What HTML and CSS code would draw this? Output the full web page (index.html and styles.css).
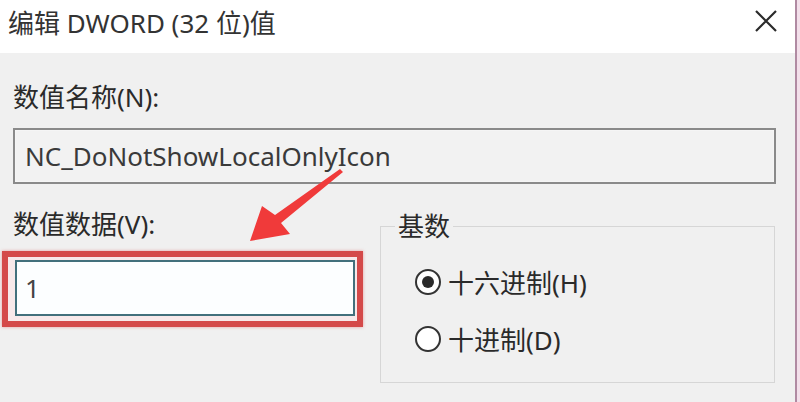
FILE: index.html
```html
<!DOCTYPE html>
<html lang="zh-CN">
<head>
<meta charset="utf-8">
<title>编辑 DWORD (32 位)值</title>
<link rel="stylesheet" href="styles.css">
</head>
<body>
<div class="dialog">
  <div class="titlebar">
    <span class="title">编辑 DWORD (32 位)值</span>
    <svg class="close" viewBox="0 0 22 22" width="22" height="22"><path d="M1 1 L21 21 M21 1 L1 21" stroke="#2b2b2b" stroke-width="2.2" fill="none"/></svg>
  </div>
  <div class="body">
    <div class="label name-label">数值名称(N):</div>
    <div class="namebox">NC_DoNotShowLocalOnlyIcon</div>
    <div class="row">
      <div class="leftcol">
        <div class="label data-label">数值数据(V):</div>
        <div class="highlight">
          <div class="databox">1</div>
        </div>
      </div>
      <fieldset class="group">
        <legend class="legend">基数</legend>
        <div class="radio"><span class="dot checked"></span><span>十六进制(H)</span></div>
        <div class="radio"><span class="dot"></span><span>十进制(D)</span></div>
      </fieldset>
    </div>
    <svg class="arrow" viewBox="0 0 800 402" width="800" height="402">
      <polygon points="343,172 281,223 290,234 250,241 262,206 275,215 340,169" fill="#f03a3a"/>
    </svg>
  </div>
</div>
</body>
</html>
```
FILE: styles.css
```css
html, body {
  margin: 0;
  padding: 0;
}
body {
  width: 800px;
  height: 402px;
  overflow: hidden;
  background: #f3dfea;
  font-family: "Noto Sans", "Noto Sans CJK SC", sans-serif;
  color: #2a2a2a;
}
.dialog {
  width: 795px;
  height: 402px;
  border-right: 2px solid #b08aa2;
  display: flex;
  flex-direction: column;
}
.titlebar {
  height: 53px;
  background: #ffffff;
  display: flex;
  align-items: center;
  justify-content: space-between;
  padding: 0 18px 0 8px;
  flex-shrink: 0;
}
.title {
  font-size: 26px;
  line-height: 30px;
  color: #333;
  margin-top: -8px;
}
.close {
  margin-top: -11px;
}
.body {
  flex: 1;
  background: #f0f0f0;
  padding: 0 0 0 2px;
  position: relative;
}
.label {
  font-size: 26px;
  line-height: 30px;
  margin-left: 11px;
}
.name-label {
  margin-top: 29px;
}
.namebox {
  margin: 16px 0 0 11px;
  width: 759px;
  height: 52px;
  border: 2px solid #8a8a8a;
  box-shadow: 0 0 2px #fff inset;
  background: #f2f2f2;
  box-sizing: content-box;
  font-size: 26px;
  line-height: 52px;
  text-indent: 10px;
  color: #3a3a3a;
}
.row {
  display: flex;
  margin-top: 25px;
}
.leftcol {
  width: 361px;
}
.data-label {
  margin-bottom: 12px;
}
.highlight {
  border: 6px solid #d44a4a;
  box-shadow: 0 0 3px rgba(220, 80, 80, 0.5);
  background: #f7e9ea;
  padding: 3px 2px 5px 7px;
}
.databox {
  height: 52px;
  border: 2px solid #42707c;
  background: #fcfeff;
  font-size: 26px;
  line-height: 52px;
  padding-left: 8px;
  color: #444;
}
.group {
  margin: 4px 0 0 17px;
  width: 395px;
  height: 170px;
  box-sizing: border-box;
  border: 1px solid #d6d6d6;
  padding: 0 0 0 34px;
}
.legend {
  font-size: 26px;
  padding: 0 3px;
  margin-left: -20px;
  line-height: 26px;
}
.radio {
  display: flex;
  align-items: center;
  gap: 7px;
  font-size: 26px;
  height: 30px;
  margin-top: 28px;
}
.radio + .radio {
  margin-top: 27px;
}
.dot {
  width: 22px;
  height: 22px;
  border: 2px solid #333;
  border-radius: 50%;
  background: #fff;
  display: flex;
  align-items: center;
  justify-content: center;
  flex-shrink: 0;
}
.dot.checked::after {
  content: "";
  width: 12px;
  height: 12px;
  border-radius: 50%;
  background: #2a2a2a;
}
.arrow {
  position: absolute;
  left: 0;
  top: -53px;
  pointer-events: none;
}
```
